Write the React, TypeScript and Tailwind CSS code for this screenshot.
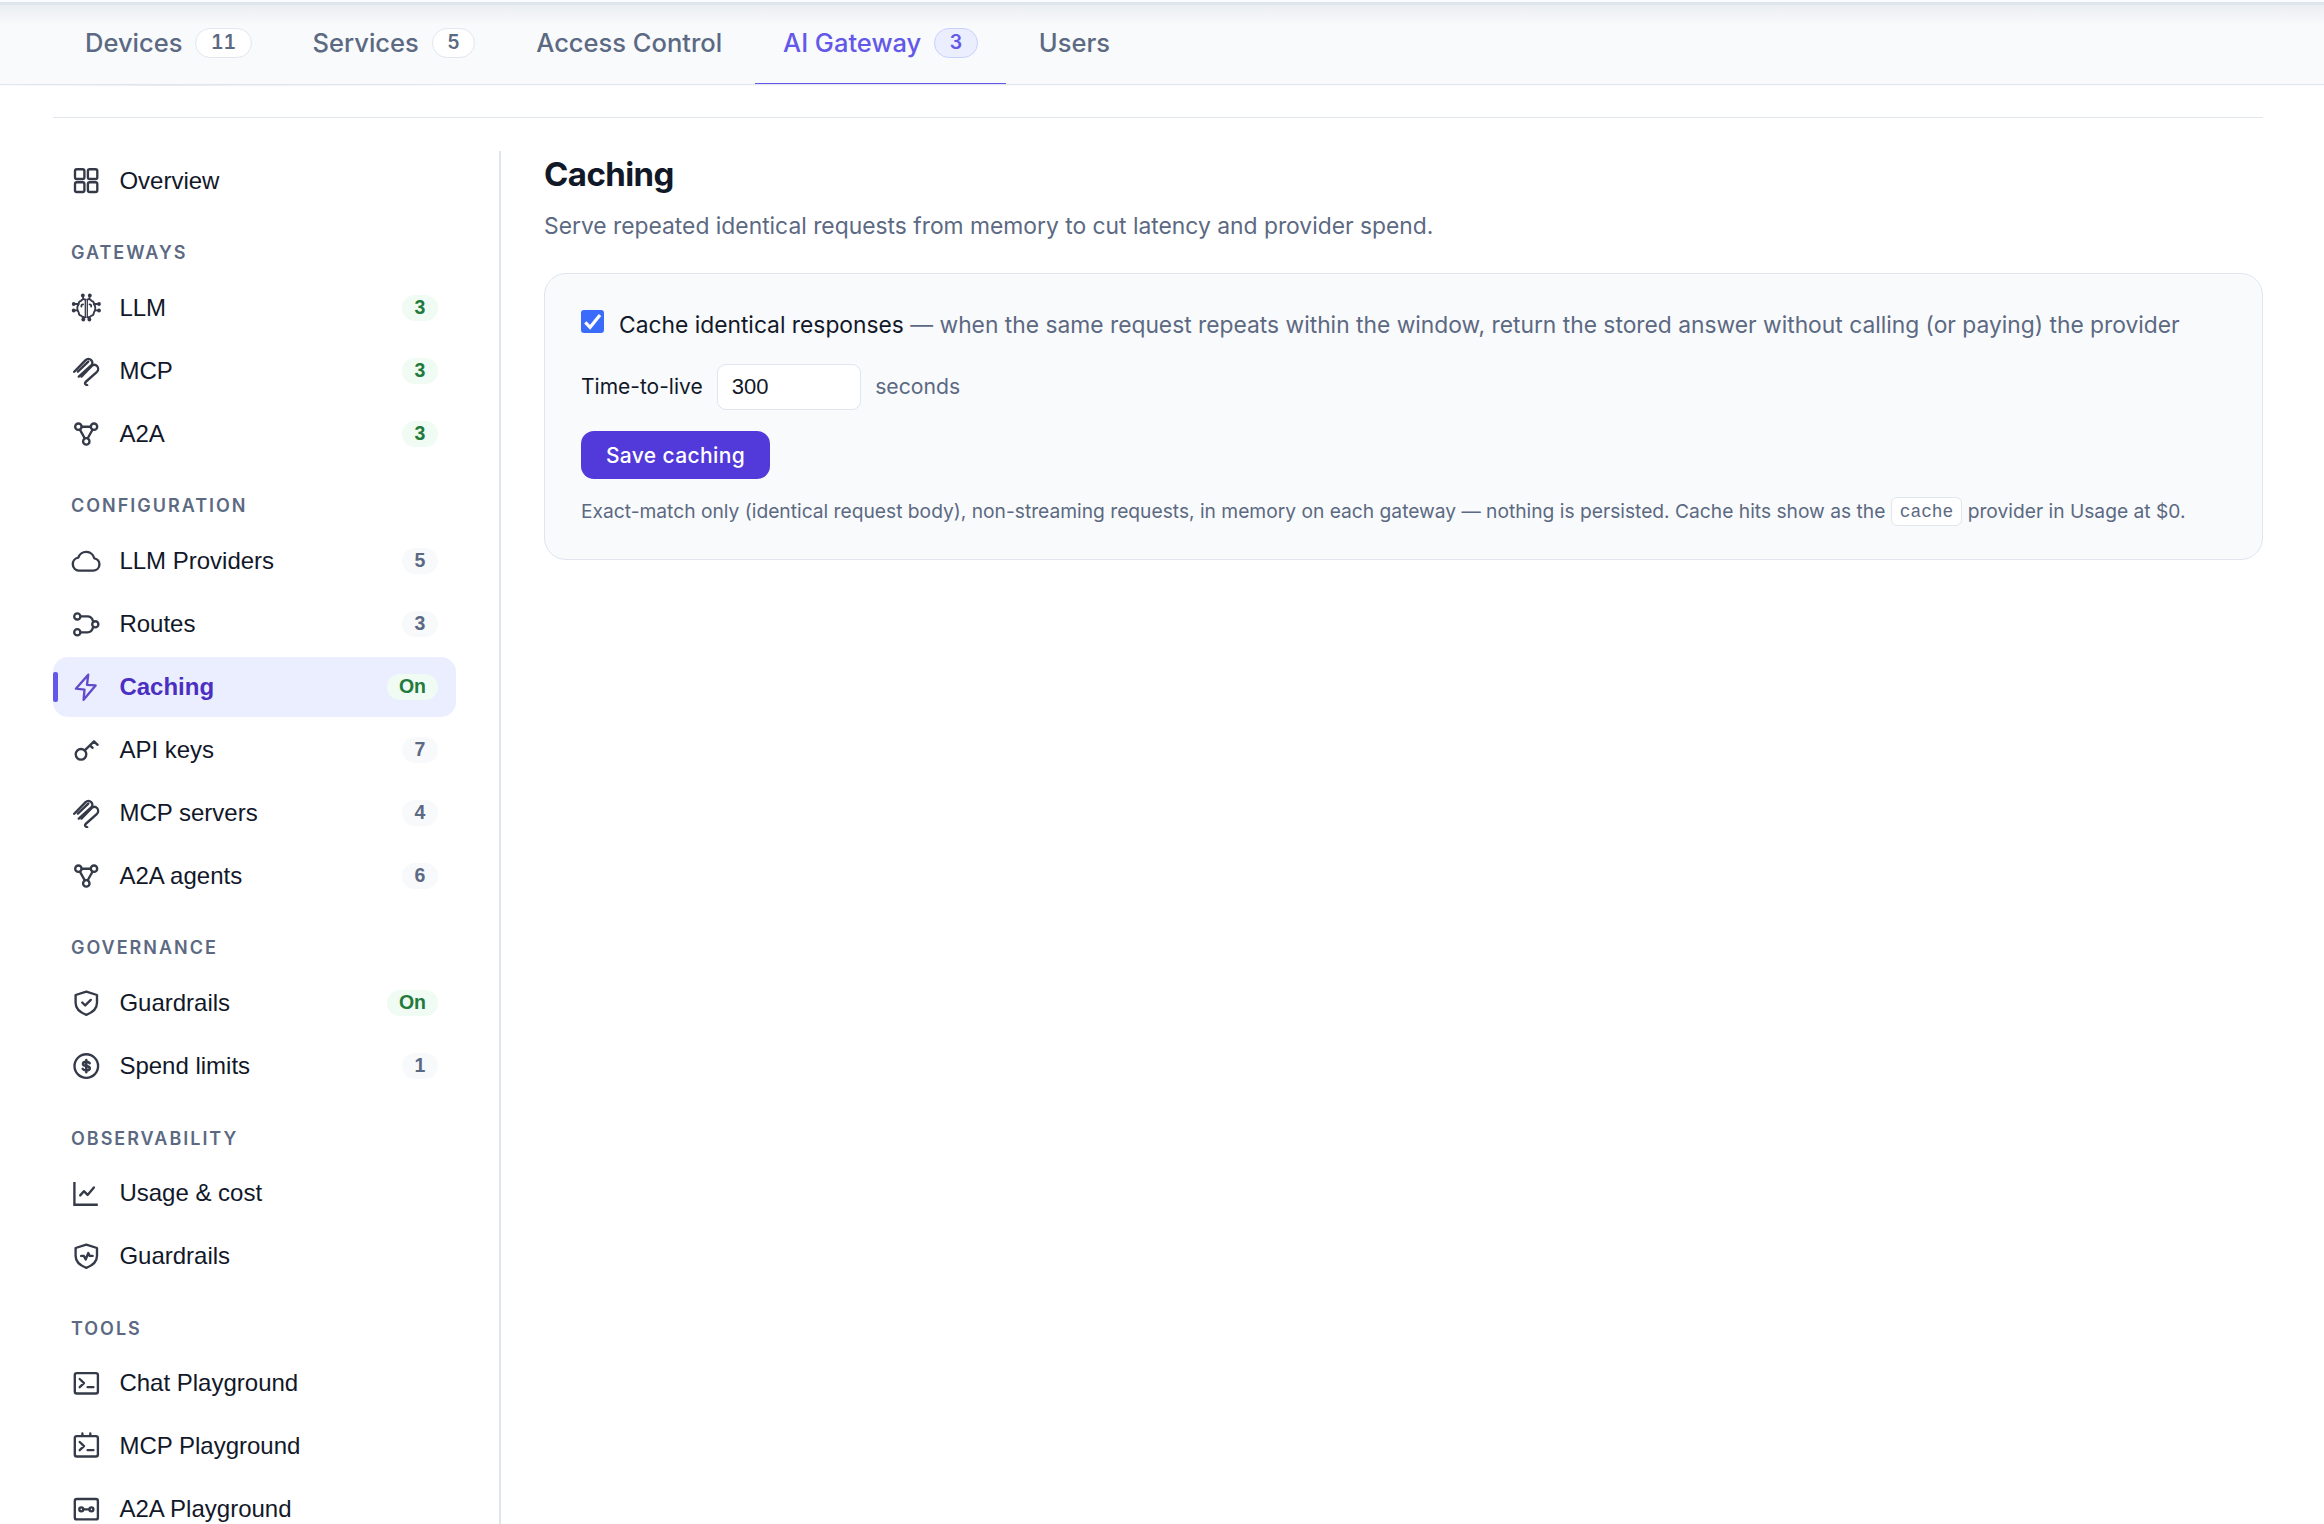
import { ReactNode } from "react";
import clsx from "clsx";

type Item = { label: string; icon: ReactNode; badge?: string; live?: boolean; active?: boolean };
type Group = { title?: string; items: Item[] };

const Icon = ({ children }: { children: ReactNode }) => (
    <svg
        viewBox="0 0 30 30"
        className="size-[30px] shrink-0 opacity-85"
        fill="none"
        stroke="currentColor"
        strokeWidth="2.35"
        strokeLinecap="round"
        strokeLinejoin="round"
    >
        {children}
    </svg>
);

const OverviewIcon = () => (
    <Icon>
        <rect x="4" y="3.2" width="9.4" height="9.8" rx="1.8" />
        <rect x="16.9" y="3.2" width="9.4" height="9.8" rx="1.8" />
        <rect x="4" y="16.2" width="9.4" height="9.8" rx="1.8" />
        <rect x="16.9" y="16.2" width="9.4" height="9.8" rx="1.8" />
    </Icon>
);

const LlmIcon = () => (
    <Icon>
        <g strokeWidth="1.8">
            <path d="M14.3 6.4v18.2M16.3 6.4v18.2" strokeWidth="1.3" />
            <path d="M14.3 6.6c-1.6-.9-3.6-.1-4.2 1.3-1.8.4-2.6 1.9-2.4 3.2-1.9 2.3-1.9 6 0 8.3 0 1.9 1.3 3.2 2.9 3.5.8 1.6 2.5 2.1 3.7 1.4" />
            <path d="M16.3 6.6c1.6-.9 3.6-.1 4.2 1.3 1.8.4 2.6 1.9 2.4 3.2 1.9 2.3 1.9 6 0 8.3 0 1.9-1.3 3.2-2.9 3.5-.8 1.6-2.5 2.1-3.7 1.4" />
            <path d="M11.8 2.8 12.3 6M18.8 2.8 18.3 6M12.4 26.5l.2-2.5M18.2 26.5l-.2-2.5M2.8 11h4.7M2.8 17.4h3.9M27.8 11h-4.7M27.8 17.4h-3.9" />
            <path d="M10.4 13.6c-.2-1.5.5-2.3 1.7-2.3M20.2 13.6c.2-1.5-.5-2.3-1.7-2.3" />
        </g>
        <g fill="currentColor" stroke="none">
            <circle cx="11.8" cy="2.4" r="1.9" />
            <circle cx="18.8" cy="2.4" r="1.9" />
            <circle cx="12.3" cy="26.5" r="1.9" />
            <circle cx="18.4" cy="26.5" r="1.9" />
            <circle cx="2.7" cy="11" r="1.9" />
            <circle cx="2.7" cy="17.5" r="1.9" />
            <circle cx="28" cy="11" r="1.9" />
            <circle cx="28" cy="17.5" r="1.9" />
        </g>
    </Icon>
);

const McpIcon = () => (
    <Icon>
        <path d="M3.2 15.8 14.6 4.1c1.6-1.6 4-1.6 5.6 0s1.6 3.6 0 5.2L7.8 20.6" />
        <path d="M10.4 20.6 20.8 10c1.6-1.6 3.7-1.6 5.2 0s1.5 4.2 0 5.8L14.6 26c-.9.9-.7 1.7.1 2.5l1.5.8" />
        <path d="M6.8 15.6 17.3 5.6" />
    </Icon>
);

const AgentIcon = () => (
    <Icon>
        <circle cx="7.4" cy="7.7" r="3.2" />
        <circle cx="23" cy="7.7" r="3.2" />
        <circle cx="15.3" cy="22.4" r="3.2" />
        <path d="M10.8 7.7h8.8M8.9 10.7l4.9 8.6M21.5 10.7l-4.8 8.6" />
    </Icon>
);

const CloudIcon = () => (
    <Icon>
        <path d="M7.8 24.6h14.8a6.2 6.2 0 0 0 .7-12.3 8.3 8.3 0 0 0-16-.6 6.5 6.5 0 0 0 .5 12.9z" />
    </Icon>
);

const RouteIcon = () => (
    <Icon>
        <circle cx="6.3" cy="7.4" r="3.1" />
        <circle cx="6.3" cy="23.3" r="3.1" />
        <circle cx="24.3" cy="15.3" r="3.1" />
        <path d="M9.6 7.4h6.8c3.5 0 4.9 1.9 5.7 5.1M9.6 23.3h6.8c3.5 0 4.9-1.9 5.7-5.1" />
    </Icon>
);

const BoltIcon = () => (
    <Icon>
        <path d="M17.2 2.7 4.9 16.7l8.6.9-.9 10.2 12-14.4-8.6-.6z" />
    </Icon>
);

const KeyIcon = () => (
    <Icon>
        <circle cx="10" cy="19.3" r="5.3" />
        <path d="M14 15.2 23 6.3l3.6 3.5M19 10.3l2.6 2.5" />
    </Icon>
);

const ShieldIcon = ({ mark }: { mark: string }) => (
    <Icon>
        <path d="M15.3 3.6 26 7v7.8c0 6-4.3 9.7-10.7 12-6.4-2.3-10.7-6-10.7-12V7z" />
        <path d={mark} />
    </Icon>
);

const SpendIcon = () => (
    <Icon>
        <circle cx="15.3" cy="15.1" r="11.8" />
        <path
            d="M15.3 9v12.2M18.7 12.2c-.7-1-2-1.4-3.4-1.4-1.9 0-3.3.8-3.3 2.1 0 3.1 6.8 1.2 6.8 4.3 0 1.4-1.5 2.2-3.5 2.2-1.6 0-2.9-.5-3.6-1.5"
            strokeWidth="2.5"
        />
    </Icon>
);

const ChartIcon = () => (
    <Icon>
        <path d="M3.4 4v22.7h23.4" strokeLinecap="butt" strokeLinejoin="miter" />
        <path d="m9.2 17.4 3.7-4.2 3.7 3.7 6.3-7.4" />
    </Icon>
);

const TerminalIcon = ({ pins }: { pins?: boolean }) => (
    <Icon>
        <rect x="3.8" y="5.1" width="23.1" height="20.4" rx="2" />
        <path d="m8.7 11 4.3 4.1-4.3 4.1M16.6 19.1h5.8" />
        {pins && <path d="M11.4 2.4v2.2M19.3 2.4v2.2" />}
    </Icon>
);

const LinkBoxIcon = () => (
    <Icon>
        <rect x="3.8" y="5" width="23.1" height="20.4" rx="2" />
        <circle cx="10.3" cy="15.3" r="2" />
        <circle cx="20.4" cy="15.3" r="2" />
        <path d="M12.5 15.3h5.6" />
    </Icon>
);

const tabs = [
    { label: "Devices", count: 11 },
    { label: "Services", count: 5 },
    { label: "Access Control" },
    { label: "AI Gateway", count: 3, active: true },
    { label: "Users" },
];

const groups: Group[] = [
    { items: [{ label: "Overview", icon: <OverviewIcon /> }] },
    {
        title: "Gateways",
        items: [
            { label: "LLM", icon: <LlmIcon />, badge: "3", live: true },
            { label: "MCP", icon: <McpIcon />, badge: "3", live: true },
            { label: "A2A", icon: <AgentIcon />, badge: "3", live: true },
        ],
    },
    {
        title: "Configuration",
        items: [
            { label: "LLM Providers", icon: <CloudIcon />, badge: "5" },
            { label: "Routes", icon: <RouteIcon />, badge: "3" },
            { label: "Caching", icon: <BoltIcon />, badge: "On", live: true, active: true },
            { label: "API keys", icon: <KeyIcon />, badge: "7" },
            { label: "MCP servers", icon: <McpIcon />, badge: "4" },
            { label: "A2A agents", icon: <AgentIcon />, badge: "6" },
        ],
    },
    {
        title: "Governance",
        items: [
            { label: "Guardrails", icon: <ShieldIcon mark="m11.2 14.5 3 2.9 5.6-5.5" />, badge: "On", live: true },
            { label: "Spend limits", icon: <SpendIcon />, badge: "1" },
        ],
    },
    {
        title: "Observability",
        items: [
            { label: "Usage & cost", icon: <ChartIcon /> },
            { label: "Guardrails", icon: <ShieldIcon mark="M10.2 14.9h2.6l1.9 3.6 2.6-6.5 1.4 2.9h2.9" /> },
        ],
    },
    {
        title: "Tools",
        items: [
            { label: "Chat Playground", icon: <TerminalIcon /> },
            { label: "MCP Playground", icon: <TerminalIcon pins /> },
            { label: "A2A Playground", icon: <LinkBoxIcon /> },
        ],
    },
];

const Header = () => (
    <header className="shrink-0 bg-[#f8fafc]">
        <div className="h-[5px] border-b-3 border-[#dfe5ec]" />
        <nav className="flex h-20 gap-[4.3px] border-b border-[#e0e5ee] bg-linear-to-b from-[#ebeef1] to-[#f8fafc] to-[20px] pl-[56.7px]">
            {tabs.map((tab) => (
                <a
                    key={tab.label}
                    className={clsx(
                        "flex h-[79px] items-center gap-[13px] border-b px-[28.3px] pb-0.5 text-[25.5px] font-medium",
                        tab.active ? "border-[#6358e8] text-[#6358e8]" : "border-transparent text-[#5c6982]",
                    )}
                >
                    {tab.label}
                    {tab.count && (
                        <span
                            className={clsx(
                                "flex h-[30px] items-center rounded-full border px-[14.5px] text-[19.5px] font-semibold tabular-nums",
                                tab.active ? "border-[#c9d1fb] bg-[#ebeefe]" : "border-[#e2e6ee] bg-white",
                            )}
                        >
                            {tab.count}
                        </span>
                    )}
                </a>
            ))}
        </nav>
        <div className="h-px bg-linear-to-r from-[#fafbfd] via-[#e9ebf0] via-7% to-[#fafbfd] to-20%" />
    </header>
);

const SidebarItem = ({ label, icon, badge, live, active }: Item) => (
    <a
        className={clsx(
            "relative flex h-[60px] items-center gap-[18.4px] rounded-[15px] px-[18px] pb-px text-2xl",
            active ? "bg-[#ebeefe] font-bold text-[#4a2fc2]" : "text-[#121829]",
        )}
    >
        {active && <span className="absolute top-[15px] left-0 h-[30px] w-[5px] rounded-xs bg-[#6358e8]" />}
        {icon}
        <span className="flex-1">{label}</span>
        {badge && (
            <span
                className={clsx(
                    "flex h-[26px] min-w-9 items-center justify-center rounded-full px-3 pb-px text-[19.5px] font-bold",
                    live ? "bg-[#effbf3] text-[#1f7a3c]" : "bg-[#f7f9fb] text-[#5c6982]",
                )}
            >
                {badge}
            </span>
        )}
    </a>
);

const Sidebar = () => (
    <aside className="w-[448px] shrink-0 border-r-2 border-[#e0e5ee] pr-[43px] font-['Liberation_Sans',Arial,sans-serif]">
        {groups.map((group, i) => (
            <div key={i}>
                {group.title && (
                    <h3 className="flex h-[67.15px] items-end px-[18px] pb-[13px] font-['Inter',sans-serif] text-lg leading-6 font-semibold tracking-[0.11em] text-[#5c6982] uppercase">
                        {group.title}
                    </h3>
                )}
                <div className="flex flex-col gap-[3px]">
                    {group.items.map((item) => (
                        <SidebarItem key={item.label} {...item} />
                    ))}
                </div>
            </div>
        ))}
    </aside>
);

const CachingPanel = () => (
    <main className="min-w-0 flex-1 pl-[43px]">
        <h1 className="text-[33px] leading-[46px] font-bold tracking-[-0.018em] text-[#111827]">Caching</h1>
        <p className="mt-3 text-[22.83px] leading-[34px] text-[#5c6982]">
            Serve repeated identical requests from memory to cut latency and provider spend.
        </p>

        <section className="mt-[30px] h-[287px] rounded-[22px] border border-[#e0e5ee] bg-[#f8fafc] px-9 pt-[34px] text-[#121829]">
            <label className="flex h-[33px] gap-[15px] text-[22.81px] leading-[34px] whitespace-nowrap">
                <span className="mt-0.5 flex size-[23px] shrink-0 items-center justify-center rounded-[3px] bg-[#3b6bfb]">
                    <svg viewBox="0 0 23 23" className="size-[23px]" fill="none" stroke="white" strokeWidth="3.2">
                        <path d="m4.3 12.3 4.8 5L19 5" />
                    </svg>
                </span>
                <span>
                    Cache identical responses{" "}
                    <span className="text-[#5c6982]">
                        — when the same request repeats within the window, return the stored answer without calling (or paying) the
                        provider
                    </span>
                </span>
            </label>

            <div className="mt-[23px] flex h-[46px] items-center gap-[14.5px] text-[21px]">
                <span>Time-to-live</span>
                <input
                    defaultValue="300"
                    className="-ml-[0.5px] h-[46px] w-36 rounded-[9px] border border-[#e0e5ee] bg-white px-3.5 font-['Liberation_Sans',Arial,sans-serif] text-[22px]"
                />
                <span className="text-[21.2px] text-[#5c6982]">seconds</span>
            </div>

            <button className="mt-[21px] block h-12 w-[189px] rounded-[13px] bg-[#5139da] pt-px text-[21px] font-medium tracking-[0.018em] text-white">
                Save caching
            </button>

            <p className="mt-[17px] text-[19.22px] leading-[31px] whitespace-nowrap text-[#5c6982]">
                Exact-match only (identical request body), non-streaming requests, in memory on each gateway — nothing is persisted. Cache
                hits show as the{" "}
                <code className="relative -top-px inline-block h-[29px] rounded-md border border-[#e0e5ee] bg-white px-2 align-middle font-['Liberation_Mono',monospace] text-[17.85px] leading-[29px]">
                    cache
                </code>{" "}
                provider in Usage at $0.
            </p>
        </section>
    </main>
);

export default function App() {
    return (
        <div className="flex h-screen flex-col overflow-hidden bg-white font-['Inter',sans-serif]">
            <Header />
            <div className="mt-[31px] mr-[61px] ml-[53px] flex min-h-0 flex-1 flex-col border-t border-[#e0e5ee] pt-[33px]">
                <div className="flex min-h-0 flex-1">
                    <Sidebar />
                    <CachingPanel />
                </div>
            </div>
        </div>
    );
}
